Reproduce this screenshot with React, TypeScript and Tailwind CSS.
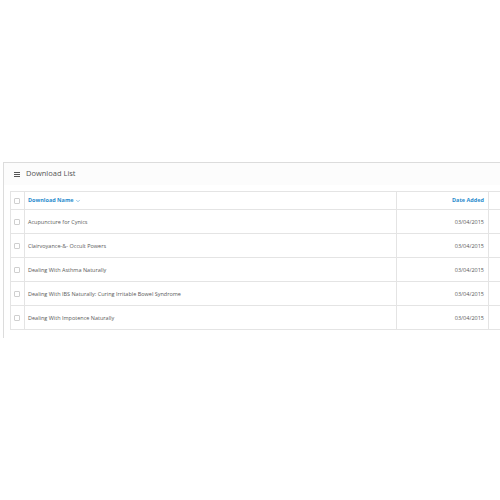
import { ChevronDown } from "lucide-react";

const rows = [
  { name: "Acupuncture for Cynics", date: "03/04/2015" },
  { name: "Clairvoyance-&- Occult Powers", date: "03/04/2015" },
  { name: "Dealing With Asthma Naturally", date: "03/04/2015" },
  { name: "Dealing With IBS Naturally: Curing Irritable Bowel Syndrome", date: "03/04/2015" },
  { name: "Dealing With Impotence Naturally", date: "03/04/2015" },
];

function Box() {
  return <div className="w-[6px] h-[6px] border border-[#cfcfcf] rounded-[1px] bg-white" />;
}

export default function App() {
  return (
    <div
      className="w-[500px] h-[500px] bg-white overflow-hidden pt-[162px] pl-[3px]"
      style={{ fontFamily: '"Open Sans", "Liberation Sans", sans-serif' }}
    >
      <div className="w-[520px] h-[176px] border-l border-t border-[#dcdcdc] bg-white">
        <div className="h-[22px] flex items-center gap-[6px] pl-[10px] bg-[#fcfcfc]">
          <div className="flex flex-col gap-[1px]">
            <div className="w-[6px] h-[1px] bg-[#555]" />
            <div className="w-[6px] h-[1px] bg-[#555]" />
            <div className="w-[6px] h-[1px] bg-[#555]" />
          </div>
          <span className="text-[7.5px] text-[#555]">Download List</span>
        </div>
        <div className="pl-[6px] pt-[6px]">
          <table className="table-fixed border-collapse w-[508px] text-[5.5px] text-[#5a5a5a]">
            <colgroup>
              <col className="w-[14px]" />
              <col className="w-[372px]" />
              <col className="w-[92px]" />
              <col className="w-[30px]" />
            </colgroup>
            <thead>
              <tr className="h-[18px]">
                <td className="border border-[#e4e4e4] pl-[3px]">
                  <Box />
                </td>
                <td className="border border-[#e4e4e4] pl-[3px] font-bold text-[#2a8ccd]">
                  <span className="inline-flex items-center gap-[1px]">
                    Download Name <ChevronDown className="w-[6px] h-[6px]" strokeWidth={2} />
                  </span>
                </td>
                <td className="border border-[#e4e4e4] pr-[4px] text-right font-bold text-[#2a8ccd]">
                  Date Added
                </td>
                <td className="border border-[#e4e4e4]" />
              </tr>
            </thead>
            <tbody>
              {rows.map((r) => (
                <tr key={r.name} className="h-[24px]">
                  <td className="border border-[#e4e4e4] pl-[3px] pt-[1px]">
                    <Box />
                  </td>
                  <td className="border border-[#e4e4e4] pl-[3px] pt-[2px]">{r.name}</td>
                  <td className="border border-[#e4e4e4] pr-[4px] pt-[2px] text-right">{r.date}</td>
                  <td className="border border-[#e4e4e4]" />
                </tr>
              ))}
            </tbody>
          </table>
        </div>
      </div>
    </div>
  );
}
